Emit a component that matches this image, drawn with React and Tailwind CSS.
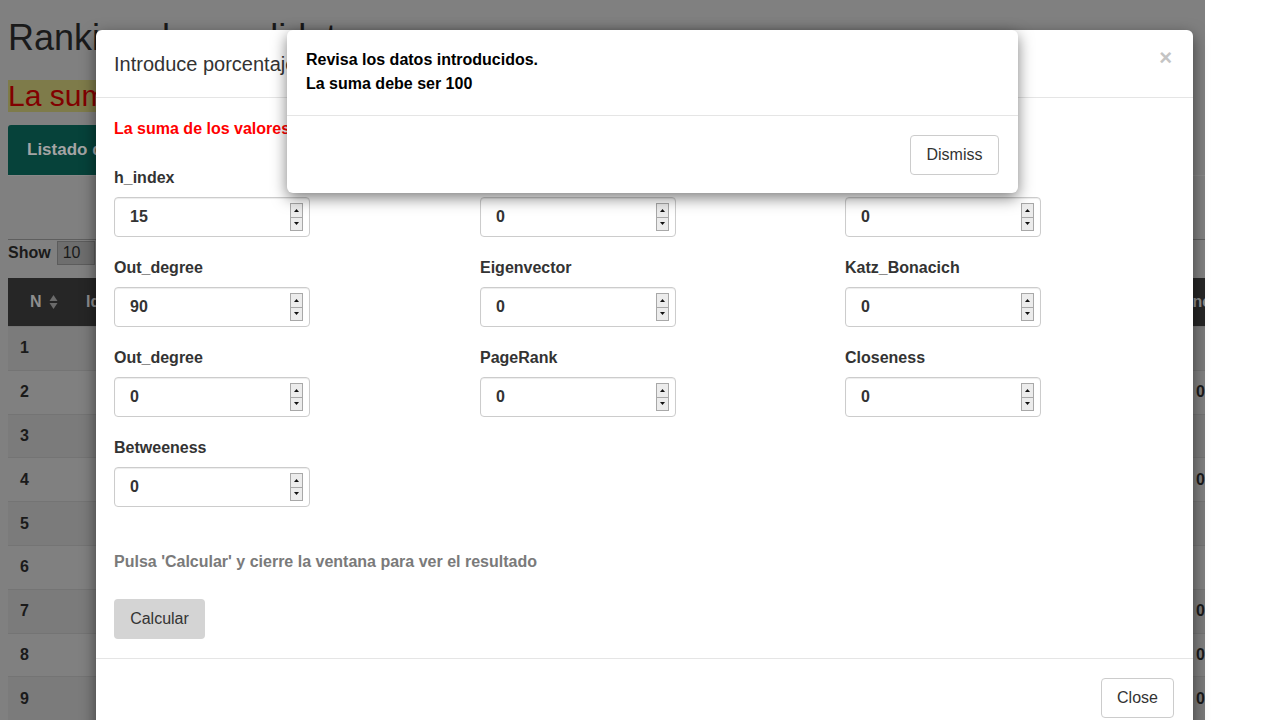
import React from "react";

function Spinner() {
  return (
    <div className="flex flex-col w-[13px] h-[28px] border border-[#a8a8a8] bg-[#ececec]">
      <div className="flex-1 flex items-center justify-center border-b border-[#a8a8a8]">
        <svg width="5" height="3" viewBox="0 0 5 3"><path d="M2.5 0L5 3H0z" fill="#111" /></svg>
      </div>
      <div className="flex-1 flex items-center justify-center">
        <svg width="5" height="3" viewBox="0 0 5 3"><path d="M0 0h5L2.5 3z" fill="#111" /></svg>
      </div>
    </div>
  );
}

function NumField({ label, value }) {
  return (
    <div className="flex flex-col">
      <div className="text-[16px] leading-[22px] font-bold text-[#333333] mb-[8px]">{label}</div>
      <div className="w-[196px] h-[40px] border border-[#cccccc] rounded-[4px] flex items-center pl-[15px] pr-[6px] shadow-[inset_0_1px_1px_rgba(0,0,0,0.075)]">
        <span className="flex-1 text-[16px] font-bold text-[#333333]">{value}</span>
        <Spinner />
      </div>
    </div>
  );
}

function SortIcon() {
  return (
    <svg width="9" height="16" viewBox="0 0 9 16" className="ml-[7px]">
      <path d="M4.5 1L8.5 7H0.5z" fill="#6b6b6b" />
      <path d="M0.5 9h8L4.5 15z" fill="#6b6b6b" />
    </svg>
  );
}

const rows = [
  { n: 1, v: "" },
  { n: 2, v: "0" },
  { n: 3, v: "" },
  { n: 4, v: "0" },
  { n: 5, v: "" },
  { n: 6, v: "" },
  { n: 7, v: "0" },
  { n: 8, v: "0" },
  { n: 9, v: "0" },
];

export default function App() {
  const fields = [
    ["h_index", "15"],
    ["In_degree", "0"],
    ["Degree", "0"],
    ["Out_degree", "90"],
    ["Eigenvector", "0"],
    ["Katz_Bonacich", "0"],
    ["Out_degree", "0"],
    ["PageRank", "0"],
    ["Closeness", "0"],
    ["Betweeness", "0"],
  ];
  return (
    <div className="relative w-[1280px] h-[720px] overflow-hidden bg-white flex font-['Liberation_Sans',Arial,sans-serif]">
      {/* dimmed background page */}
      <div className="w-[1205px] h-[720px] shrink-0 bg-[#808080] pl-[8px] overflow-hidden">
        <h1 className="mt-[18px] text-[36px] leading-[40px] text-[#1a1a1a] whitespace-nowrap">Ranking de candidatos</h1>
        <div className="mt-[22px] inline-block h-[32px] bg-[#7e7b4a] text-[#820000] text-[30px] leading-[32px] whitespace-nowrap">
          La suma de los valores debe ser 100
        </div>
        <div className="mt-[12px] flex border-b border-[#888888]">
          <div className="h-[50px] px-[19px] flex items-center bg-[#06423a] rounded-t-[3px] text-[17px] font-bold text-[#a4a4a4] whitespace-nowrap">
            Listado de candidatos
          </div>
        </div>
        <div className="h-[64px] border-b border-[#5e5e5e]" />
        <div className="mt-[1px] flex items-center h-[24px]">
          <span className="text-[16px] font-bold text-[#1a1a1a]">Show</span>
          <div className="ml-[6px] w-[38px] h-[24px] bg-[#6e6e6e] border border-[#5c5c5c] flex items-center pl-[5px] text-[16px] text-[#1a1a1a]">10</div>
        </div>
        <div className="mt-[13px] w-[1230px]">
          <div className="h-[48px] bg-[#262626] flex items-center text-[16px] font-bold text-[#8e8e8e]">
            <div className="w-[70px] pl-[22px] flex items-center">
              N<SortIcon />
            </div>
            <div className="flex-1 pl-[8px]">Id</div>
            <div className="w-[89px] whitespace-nowrap">Closeness</div>
          </div>
          {rows.map((r, i) => (
            <div
              key={r.n}
              className={`h-[43.8px] flex items-center border-t border-[#747474] text-[16px] font-bold text-[#1a1a1a] ${i % 2 === 0 ? "bg-[#7b7b7b]" : "bg-[#808080]"}`}
            >
              <div className="w-[70px] pl-[12px]">{r.n}</div>
              <div className="flex-1" />
              <div className="w-[42px]">{r.v}</div>
            </div>
          ))}
        </div>
      </div>

      {/* main modal */}
      <div className="absolute left-[96px] top-[30px] w-[1097px] h-[720px] bg-white rounded-t-[6px] shadow-[0_5px_15px_rgba(0,0,0,0.5)] flex flex-col">
        <div className="h-[68px] shrink-0 flex items-center justify-between pl-[18px] pr-[21px] border-b border-[#e5e5e5]">
          <span className="text-[20px] text-[#333333]">Introduce porcentajes para cada indicador</span>
          <span className="self-start mt-[17px] text-[22px] leading-none font-bold text-[#c4c4c4]">×</span>
        </div>
        <div className="px-[18px] pt-[20px] pb-[19px]">
          <div className="text-[16px] leading-[22px] font-bold text-[#ff0000]">La suma de los valores debe ser 100</div>
          <div className="mt-[27px] grid grid-cols-[366px_365px_366px] gap-y-[20px]">
            {fields.map(([l, v], i) => (
              <NumField key={i} label={l} value={v} />
            ))}
          </div>
          <div className="mt-[44px] text-[16px] leading-[22px] font-bold text-[#7a7a7a]">
            Pulsa 'Calcular' y cierre la ventana para ver el resultado
          </div>
          <button className="mt-[26px] w-[91px] h-[40px] rounded-[4px] bg-[#d4d4d4] text-[16px] text-[#333333] flex items-center justify-center">
            Calcular
          </button>
        </div>
        <div className="border-t border-[#e5e5e5] flex justify-end pr-[19px] pt-[19px]">
          <button className="w-[73px] h-[40px] rounded-[4px] border border-[#cccccc] bg-white text-[16px] text-[#333333] flex items-center justify-center">
            Close
          </button>
        </div>
      </div>

      {/* alert dialog */}
      <div className="absolute left-[287px] top-[30px] w-[731px] h-[163px] bg-white rounded-[6px] shadow-[0_5px_15px_rgba(0,0,0,0.5)] flex flex-col">
        <div className="px-[19px] pt-[18px] pb-[19px] border-b border-[#e5e5e5] text-[16px] leading-[24px] font-bold text-black">
          <div>Revisa los datos introducidos.</div>
          <div>La suma debe ser 100</div>
        </div>
        <div className="flex justify-end pr-[19px] pt-[19px]">
          <button className="w-[89px] h-[40px] rounded-[4px] border border-[#cccccc] bg-white text-[16px] text-[#333333] flex items-center justify-center">
            Dismiss
          </button>
        </div>
      </div>
    </div>
  );
}
